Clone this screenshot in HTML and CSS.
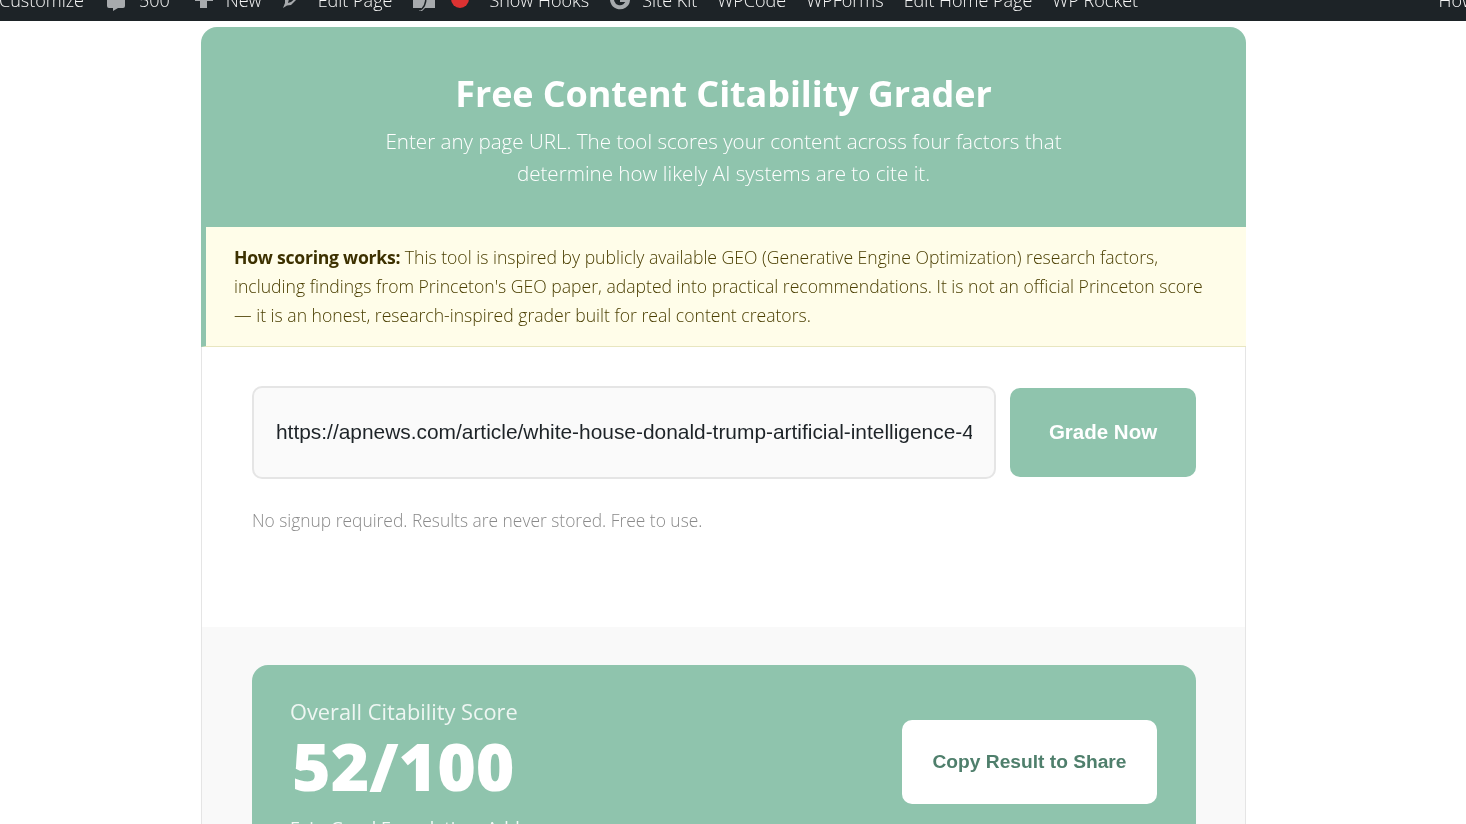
FILE: index.html
```html
<!DOCTYPE html>
<html lang="en">
<head>
<meta charset="utf-8">
<title>Free Content Citability Grader</title>
<link rel="stylesheet" href="styles.css">
</head>
<body>
<nav class="adminbar">
  <div class="bar-left">
    <span class="bar-item first">Customize</span>
    <span class="bar-item"><svg class="ico" viewBox="0 0 20 20"><path d="M3 0h14a2 2 0 0 1 2 2v13a2 2 0 0 1-2 2h-5l-5 3v-3H3a2 2 0 0 1-2-2V2a2 2 0 0 1 2-2z"/></svg>500</span>
    <span class="bar-item plus"><svg class="ico" viewBox="0 0 20 20"><path d="M6 1h7v6h6v3h-6v7H6v-7H1V7h5z"/></svg>New</span>
    <span class="bar-item pen"><svg class="ico" viewBox="0 0 20 20"><path d="M3 12L11 4l6 5-8 8-4 .5-4 2.500 2-5zM7 11l-1 4 3-1 6-5-2-1.500z" fill-rule="evenodd"/></svg>Edit Page</span>
    <span class="bar-item seo"><svg class="ico yoast" viewBox="0 0 24 20" preserveAspectRatio="none"><path d="M1 0h22v17H13l-3 3H7l3-3H1z"/><path d="M14 6c0 6-2 11-6 13" class="yoast-line"/></svg><i class="dot"></i></span>
    <span class="bar-item">Show Hooks</span>
    <span class="bar-item gk"><svg class="ico g" viewBox="0 0 22 22"><path d="M17 5a8 8 0 1 0 2 6h-8"/></svg>Site Kit</span>
    <span class="bar-item">WPCode</span>
    <span class="bar-item">WPForms</span>
    <span class="bar-item">Edit Home Page</span>
    <span class="bar-item">WP Rocket</span>
  </div>
  <span class="bar-item howdy">Howdy</span>
</nav>

<main class="tool">
  <header class="hero">
    <h1>Free Content Citability Grader</h1>
    <p>Enter any page URL. The tool scores your content across four factors that<br>determine how likely AI systems are to cite it.</p>
  </header>

  <div class="notice">
    <strong>How scoring works:</strong> This tool is inspired by publicly available GEO (Generative Engine Optimization) research factors, including findings from Princeton's GEO paper, adapted into practical recommendations. It is not an official Princeton score — it is an honest, research-inspired grader built for real content creators.
  </div>

  <section class="form-area">
    <div class="form-row">
      <input class="url" type="text" value="https://apnews.com/article/white-house-donald-trump-artificial-intelligence-4">
      <button class="grade" type="button">Grade Now</button>
    </div>
    <p class="hint">No signup required. Results are never stored. Free to use.</p>
  </section>

  <section class="results">
    <div class="score-card">
      <div class="score-text">
        <div class="score-label">Overall Citability Score</div>
        <div class="score-num">52/100</div>
        <div class="score-verdict">Fair. Good Foundation, Add</div>
      </div>
      <button class="copy" type="button">Copy Result to Share</button>
    </div>
  </section>
</main>
</body>
</html>
```

FILE: styles.css
```css
* { box-sizing: border-box; }
html, body { height: 824px; overflow: hidden; }
body {
  margin: 0;
  background: #fff;
  font-family: "Open Sans", "Noto Sans", sans-serif;
  color: #1d2327;
}
.adminbar {
  height: 21px;
  background: #1d2327;
  color: #f6f6f6;
  display: flex;
  justify-content: space-between;
  overflow: hidden;
  font-size: 18px;
  font-weight: 300;
  line-height: 18px;
}
.bar-left { display: flex; gap: 20px; margin-top: -9px; height: 20px; will-change: opacity; }
.bar-item { display: flex; align-items: flex-start; white-space: nowrap; gap: 13px; }
.first { margin-left: -1px; margin-right: 2px; }
.plus { margin-left: 4px; gap: 12px; }
.pen { gap: 16px; }
.pen .ico { margin-top: -3px; }
.gk { gap: 11px; }
.howdy { margin-top: -9px; margin-right: -28px; will-change: opacity; }
.ico { width: 20px; height: 20px; fill: #a7aaad; flex: none; }
.yoast { width: 24px; }
.yoast-line { stroke: #1d2327; stroke-width: 1.5; fill: none; }
.g { fill: none; stroke: #a7aaad; stroke-width: 4; width: 22px; height: 22px; margin-top: -2px; }
.dot { display: block; width: 18px; height: 18px; border-radius: 50%; background: #dc3232; margin-top: -1px; }
.seo { gap: 15px; }

.tool {
  width: 1045px;
  margin: 6px 0 0 201px;
  border-radius: 16px 16px 0 0;
  overflow: hidden;
  will-change: opacity;
}
.hero {
  height: 200px;
  background: #8fc4ad;
  color: #fff;
  text-align: center;
  padding-top: 42px;
}
.hero h1 { margin: 0; font-size: 36px; line-height: 50px; font-weight: 700; letter-spacing: -.1px; }
.hero p { margin: 6px 0 0; font-size: 20.6px; line-height: 32px; font-weight: 300; }
.notice {
  height: 120px;
  background: #fffde9;
  border-left: 5px solid #8fc4ad;
  border-bottom: 1px solid #e8e6c0;
  padding: 16px 28px 0;
  font-size: 17.6px;
  line-height: 29px;
  font-weight: 300;
  color: #4a3e00;
}
.notice strong { font-weight: 700; color: #3d3100; letter-spacing: -.25px; }
.form-area {
  height: 280px;
  padding: 39px 49px 0 50px;
  border: solid #e5e5e5;
  border-width: 0 1px;
}
.form-row { display: flex; align-items: center; gap: 14px; }
.url {
  width: 744px;
  height: 93px;
  border: 2px solid #e5e5e5;
  border-radius: 10px;
  background: #fafafa;
  padding: 0 22px 2px;
  font: 20.9px "Liberation Sans", Arial, sans-serif;
  color: #1d2327;
  flex: none;
}
.grade {
  width: 186px;
  height: 89px;
  border: 0;
  border-radius: 10px;
  background: #8fc4ad;
  color: #fff;
  padding-bottom: 3px;
  font: 700 20.5px "Liberation Sans", Arial, sans-serif;
  flex: none;
}
.hint { margin: 27px 0 0; font-size: 17.4px; line-height: 28px; font-weight: 300; color: #8a8a8a; }
.results {
  height: 400px;
  background: #f9f9f9;
  padding: 38px 50px 0;
  border: solid #e5e5e5;
  border-width: 0 1px;
}
.score-card {
  width: 944px;
  height: 240px;
  background: #8fc4ad;
  border-radius: 16px;
  padding: 30px 39px 0 38px;
  color: #fff;
  display: flex;
  justify-content: space-between;
  align-items: flex-start;
}
.score-label { font-size: 21.8px; line-height: 34px; opacity: .85; }
.score-num { font-size: 66px; line-height: 72px; font-weight: 800; margin-left: 2px; }
.score-verdict { font-size: 18px; line-height: 28px; margin-top: 13px; opacity: .9; }
.copy {
  width: 255px;
  height: 84px;
  margin-top: 25px;
  padding-bottom: 2px;
  border: 0;
  border-radius: 10px;
  background: #fff;
  color: #4f7f6c;
  font: 700 19.2px "Liberation Sans", Arial, sans-serif;
}
```
